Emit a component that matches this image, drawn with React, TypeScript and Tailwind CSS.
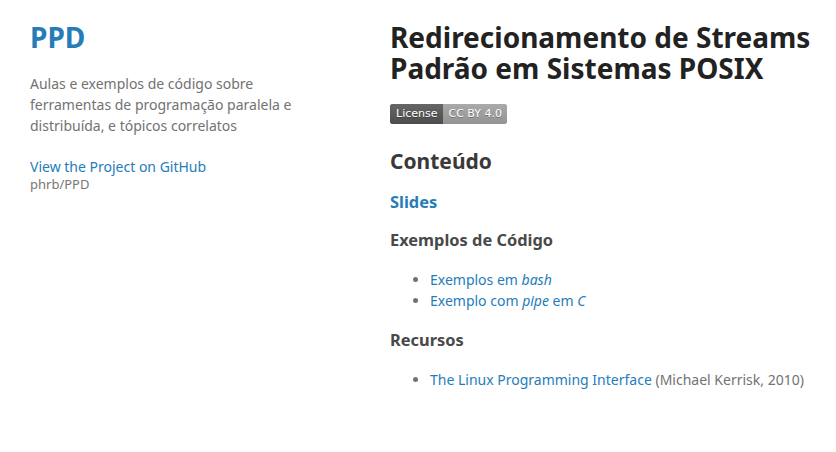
export default function App() {
  return (
    <div className="flex min-h-[452px] bg-white pl-[30px] pt-[22px] font-['Noto_Sans',sans-serif] text-[14px] leading-[1.5] text-[#727272]">
      {/* sidebar */}
      <header className="w-[270px] shrink-0">
        <h1 className="mb-5 text-[28px] font-bold leading-[1.1]">
          <a href="#" className="text-[#267CB9]">PPD</a>
        </h1>
        <p className="mb-5">Aulas e exemplos de código sobre ferramentas de programação paralela e distribuída, e tópicos correlatos</p>
        <p>
          <a href="#" className="text-[#267CB9]">
            View the Project on GitHub
            <small className="-mt-[2px] block text-[13px] text-[#777]">phrb/PPD</small>
          </a>
        </p>
      </header>

      {/* main content */}
      <section className="ml-[90px] w-[430px]">
        <h1 className="mb-5 text-[28px] font-bold leading-[1.1] text-[#222]">
          Redirecionamento de Streams Padrão em Sistemas POSIX
        </h1>
        <p className="mb-5 h-[26px]">
          <span className="inline-flex h-[20px] overflow-hidden rounded-[3px] align-top font-['DejaVu_Sans',sans-serif] text-[11px] leading-[20px] text-white [text-shadow:0_1px_0_rgba(1,1,1,0.3)]">
            <span className="bg-[#555] bg-gradient-to-b from-[#666] to-[#4d4d4d] px-[6px]">License</span>
            <span className="bg-[#9f9f9f] bg-gradient-to-b from-[#aaa] to-[#939393] px-[5px]">CC BY 4.0</span>
          </span>
        </p>
        <h2 className="mb-5 text-[21px] font-bold leading-[1.1] text-[#393939]">Conteúdo</h2>
        <h3 className="mb-5 text-[16.4px] font-bold leading-[1.1]">
          <a href="#" className="text-[#267CB9]">Slides</a>
        </h3>
        <h3 className="mb-5 text-[16.4px] font-bold leading-[1.1] text-[#494949]">Exemplos de Código</h3>
        <ul className="mb-5 list-disc pl-10">
          <li>
            <a href="#" className="text-[#267CB9]">Exemplos em <em>bash</em></a>
          </li>
          <li>
            <a href="#" className="text-[#267CB9]">Exemplo com <em>pipe</em> em <em>C</em></a>
          </li>
        </ul>
        <h3 className="mb-5 text-[16.4px] font-bold leading-[1.1] text-[#494949]">Recursos</h3>
        <ul className="mb-5 list-disc pl-10">
          <li>
            <a href="#" className="text-[#267CB9]">The Linux Programming Interface</a> (Michael Kerrisk, 2010)
          </li>
        </ul>
      </section>
    </div>
  )
}
